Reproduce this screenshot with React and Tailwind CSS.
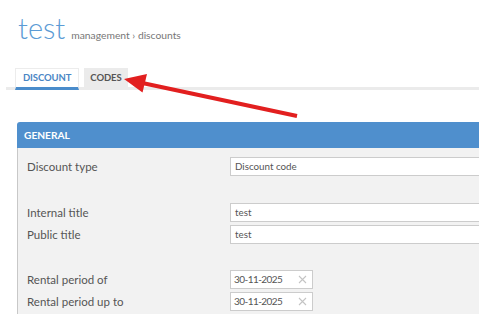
import React from "react";

function Field({ label, children, className = "" }) {
  return (
    <div className={"flex items-center " + className}>
      <div className="w-[203px] shrink-0 text-[11.5px] leading-[19px] text-[#555]">{label}</div>
      {children}
    </div>
  );
}

function TextInput({ value }) {
  return (
    <div className="h-[19px] w-[300px] shrink-0 border border-[#cccccc] bg-white pl-[4px] text-[9.8px] leading-[17px] text-[#555]">
      {value}
    </div>
  );
}

function DateInput({ value }) {
  return (
    <div className="flex h-[19px] w-[83px] shrink-0 items-center justify-between border border-[#cccccc] bg-white pl-[3px] pr-[5px] text-[10px] leading-[17px] tracking-[-0.55px] text-[#555]">
      <span>{value}</span>
      <svg width="9" height="9" viewBox="0 0 9 9">
        <path d="M1 1 L8 8 M8 1 L1 8" stroke="#c4c4c4" strokeWidth="1.1" fill="none" />
      </svg>
    </div>
  );
}

export default function App() {
  return (
    <div
      className="relative h-[314px] w-[479px] overflow-hidden bg-white"
      style={{ fontFamily: "Lato, 'Open Sans', sans-serif" }}
    >
      <div className="flex items-baseline pl-[18px] pt-[13px]">
        <span className="text-[29px] font-light leading-[30px] text-[#5b9bd5]">test</span>
        <span className="ml-[6px] text-[10.3px] text-[#777]">management › discounts</span>
      </div>

      <div className="ml-[6px] mt-[25px] flex gap-[5px] border-b-[3px] border-[#ebebeb] pl-[9px]">
        <div className="-mb-[3px] border border-b-[3px] border-[#ececec] border-b-[#4a8ccb] bg-white px-[7px] text-[9.5px] font-bold leading-[18px] tracking-[-0.1px] text-[#4a86c5]">
          DISCOUNT
        </div>
        <div className="-mb-[3px] border-b-[3px] border-[#ebebeb] bg-[#ebebeb] px-[6px] pt-px text-[9.5px] font-bold leading-[18px] tracking-[-0.1px] text-[#555]">
          CODES
        </div>
      </div>

      <div className="ml-[17px] mt-[32px] w-[520px]">
        <div className="h-[26px] rounded-tl-[3px] bg-[#4f8fcd] pl-[7px] text-[10.2px] font-bold leading-[26px] text-white">
          GENERAL
        </div>
        <div className="h-[200px] border-l border-[#c8c8c8] bg-[#f2f2f2] pl-[9px] pt-[9px]">
          <Field label="Discount type">
            <TextInput value="Discount code" />
          </Field>
          <Field label="Internal title" className="mt-[27px]">
            <TextInput value="test" />
          </Field>
          <Field label="Public title" className="mt-[3px]">
            <TextInput value="test" />
          </Field>
          <Field label="Rental period of" className="mt-[26px]">
            <DateInput value="30-11-2025" />
          </Field>
          <Field label="Rental period up to" className="mt-[3px]">
            <DateInput value="30-11-2025" />
          </Field>
        </div>
      </div>

      <svg className="pointer-events-none absolute left-0 top-0" width="479" height="314" viewBox="0 0 479 314">
        <line x1="297" y1="116" x2="140" y2="82.5" stroke="#e21f1f" strokeWidth="4" />
        <polygon points="124,79 147,74 142.5,92.5" fill="#e21f1f" />
      </svg>
    </div>
  );
}
